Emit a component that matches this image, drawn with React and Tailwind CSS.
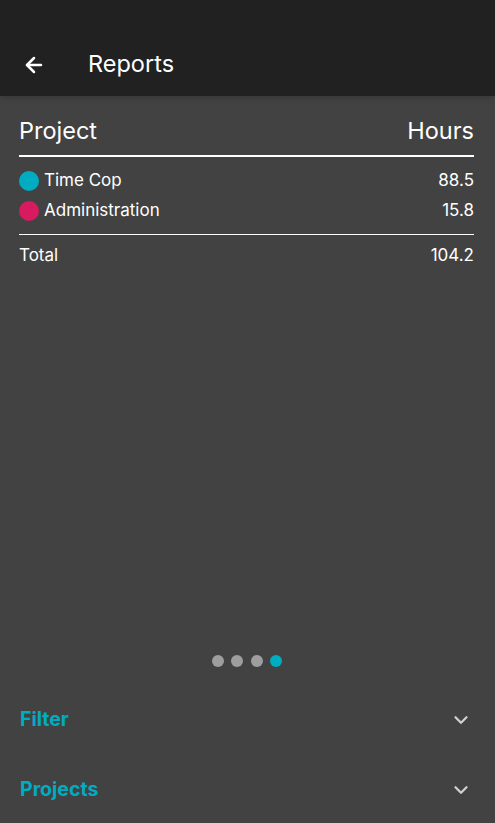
import { ArrowLeft, ChevronDown } from "lucide-react";

const rows = [
  { name: "Time Cop", hours: "88.5", color: "bg-[#00acc1]" },
  { name: "Administration", hours: "15.8", color: "bg-[#d81b60]" },
];

export default function App() {
  return (
    <div className="flex h-[823px] w-[495px] flex-col overflow-hidden bg-[#424242] text-white font-['Inter','Roboto',sans-serif]">
      <header className="flex h-[96px] shrink-0 items-end bg-[#212121] pb-[17px] shadow-md">
        <button className="ml-[20px] flex h-[28px] w-[28px] items-center justify-center">
          <ArrowLeft size={24} strokeWidth={2.5} />
        </button>
        <h1 className="ml-[40px] text-[23.5px] leading-[30px]">Reports</h1>
      </header>

      <main className="flex flex-1 flex-col">
        <div className="pl-[19px] pr-[21px] pt-[18px]">
          <div className="flex items-end justify-between border-b-[2.5px] border-white pb-[7px] text-[23.5px] leading-[34px]">
            <span>Project</span>
            <span>Hours</span>
          </div>
          <div className="border-b border-white pb-[8px] pt-[9px]">
            {rows.map((r) => (
              <div key={r.name} className="flex h-[30px] items-center justify-between text-[17px]">
                <div className="flex items-center gap-[5px]">
                  <span className={`h-[20px] w-[20px] rounded-full ${r.color}`} />
                  <span>{r.name}</span>
                </div>
                <span>{r.hours}</span>
              </div>
            ))}
          </div>
          <div className="flex h-[42px] items-center justify-between text-[17px]">
            <span>Total</span>
            <span>104.2</span>
          </div>
        </div>

        <div className="flex-1" />

        <div className="flex h-[24px] items-center justify-center gap-[7.5px] pr-[1px]">
          <span className="h-[12px] w-[12px] rounded-full bg-[#9e9e9e]" />
          <span className="h-[12px] w-[12px] rounded-full bg-[#9e9e9e]" />
          <span className="h-[12px] w-[12px] rounded-full bg-[#9e9e9e]" />
          <span className="h-[12px] w-[12px] rounded-full bg-[#00acc1]" />
        </div>
        <div className="h-[10px]" />

        {["Filter", "Projects"].map((t) => (
          <div key={t} className="flex h-[70px] items-center justify-between pl-[20px] pr-[23px] pt-[3px]">
            <span className="text-[19.5px] font-bold text-[#00acc1]">{t}</span>
            <ChevronDown size={22} strokeWidth={2.5} className="text-[#d0d0d0]" />
          </div>
        ))}
      </main>
    </div>
  );
}
